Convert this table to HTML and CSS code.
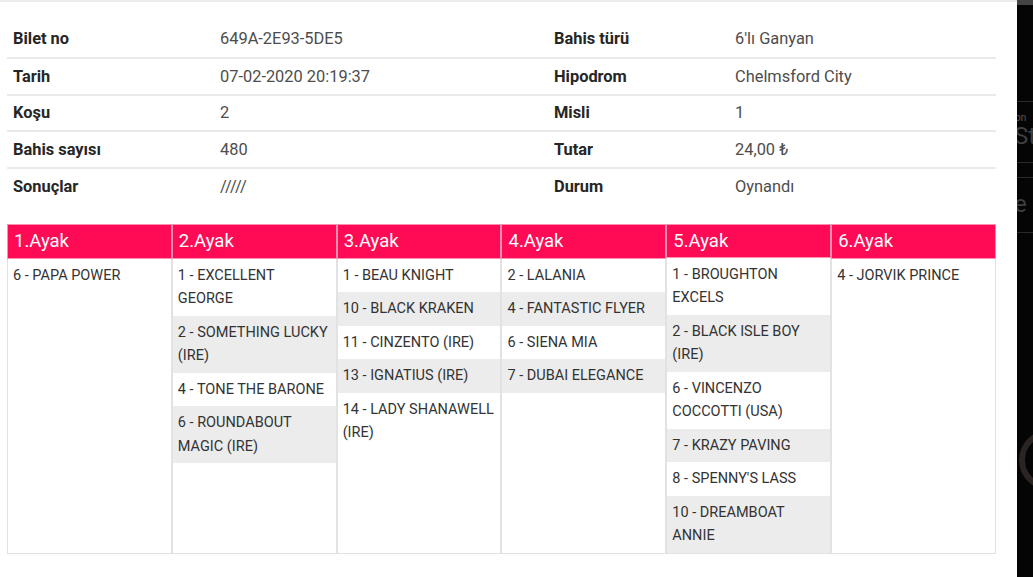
FILE: index.html
```html
<!DOCTYPE html>
<html lang="tr">
<head>
<meta charset="utf-8">
<title>Bilet</title>
<link rel="stylesheet" href="styles.css">
</head>
<body>
<div class="screen">
  <main class="page">
    <section class="info">
      <div class="info-row">
        <div class="lbl">Bilet no</div><div class="val">649A-2E93-5DE5</div>
        <div class="lbl">Bahis türü</div><div class="val">6'lı Ganyan</div>
      </div>
      <div class="info-row">
        <div class="lbl">Tarih</div><div class="val">07-02-2020 20:19:37</div>
        <div class="lbl">Hipodrom</div><div class="val">Chelmsford City</div>
      </div>
      <div class="info-row">
        <div class="lbl">Koşu</div><div class="val">2</div>
        <div class="lbl">Misli</div><div class="val">1</div>
      </div>
      <div class="info-row">
        <div class="lbl">Bahis sayısı</div><div class="val">480</div>
        <div class="lbl">Tutar</div><div class="val">24,00 ₺</div>
      </div>
      <div class="info-row">
        <div class="lbl">Sonuçlar</div><div class="val">/////</div>
        <div class="lbl">Durum</div><div class="val">Oynandı</div>
      </div>
    </section>

    <section class="legs">
      <div class="leg">
        <div class="leg-head">1.Ayak</div>
        <ul class="horses">
          <li>6 - PAPA POWER</li>
        </ul>
      </div>
      <div class="leg">
        <div class="leg-head">2.Ayak</div>
        <ul class="horses">
          <li>1 - EXCELLENT GEORGE</li>
          <li>2 - SOMETHING LUCKY (IRE)</li>
          <li>4 - TONE THE BARONE</li>
          <li>6 - ROUNDABOUT MAGIC (IRE)</li>
        </ul>
      </div>
      <div class="leg">
        <div class="leg-head">3.Ayak</div>
        <ul class="horses">
          <li>1 - BEAU KNIGHT</li>
          <li>10 - BLACK KRAKEN</li>
          <li>11 - CINZENTO (IRE)</li>
          <li>13 - IGNATIUS (IRE)</li>
          <li>14 - LADY SHANAWELL (IRE)</li>
        </ul>
      </div>
      <div class="leg">
        <div class="leg-head">4.Ayak</div>
        <ul class="horses">
          <li>2 - LALANIA</li>
          <li>4 - FANTASTIC FLYER</li>
          <li>6 - SIENA MIA</li>
          <li>7 - DUBAI ELEGANCE</li>
        </ul>
      </div>
      <div class="leg">
        <div class="leg-head">5.Ayak</div>
        <ul class="horses">
          <li>1 - BROUGHTON EXCELS</li>
          <li>2 - BLACK ISLE BOY (IRE)</li>
          <li>6 - VINCENZO COCCOTTI (USA)</li>
          <li>7 - KRAZY PAVING</li>
          <li>8 - SPENNY'S LASS</li>
          <li>10 - DREAMBOAT ANNIE</li>
        </ul>
      </div>
      <div class="leg">
        <div class="leg-head">6.Ayak</div>
        <ul class="horses">
          <li>4 - JORVIK PRINCE</li>
        </ul>
      </div>
    </section>
  </main>
  <aside class="edge">
    <div class="edge-top"></div>
    <div class="edge-block">
      <span class="edge-small">on</span>
      <span class="edge-big">St</span>
    </div>
    <div class="edge-block2"><span class="edge-big">e</span></div>
    <div class="edge-badge"></div>
  </aside>
</div>
</body>
</html>
```

FILE: styles.css
```css
* { box-sizing: border-box; }
html, body { margin: 0; padding: 0; }
body {
  font-family: Roboto, "Noto Sans", "Liberation Sans", sans-serif;
  background: #fff;
  width: 1033px;
  height: 577px;
  overflow: hidden;
}
.screen {
  display: flex;
  height: 577px;
}
.page {
  width: 1017px;
  flex: none;
  border-top: 2px solid #ececec;
  padding: 18px 0 0 7px;
}
.info {
  width: 989px;
}
.info-row {
  display: grid;
  grid-template-columns: 207px 334px 181px 1fr;
  height: 36.75px;
  align-items: center;
  border-top: 2px solid #eaeaea;
}
.info-row:first-child { border-top: none; }
.lbl, .val {
  padding-left: 6px;
  font-size: 16.4px;
}
.lbl {
  font-weight: 700;
  color: #262626;
}
.val {
  color: #4d4d4d;
}
.legs {
  display: flex;
  width: 989px;
  margin-top: 20px;
}
.leg {
  flex: 1 1 0;
  border: 1px solid #e2e2e2;
  height: 330px;
  display: flex;
  flex-direction: column;
}
.leg-head {
  background: #ff0a55;
  color: #fff;
  font-size: 18.5px;
  height: 35px;
  margin: -1px -1px 0;
  border: 1px solid #ff8fae;
  padding: 4px 0 0 6px;
  line-height: 24px;
}
.horses {
  list-style: none;
  margin: 0;
  padding: 0;
}
.horses li {
  font-size: 14.5px;
  color: #333;
  line-height: 23.5px;
  padding: 5px 5px 5px 5px;
}
.horses li:nth-child(even) {
  background: #ececec;
}
.edge {
  flex: 1;
  background: #050505;
  position: relative;
  overflow: hidden;
}
.edge-top {
  height: 5px;
  background: #444;
}
.edge-block {
  margin-top: 96px;
  border-top: 1px solid #2a2a2a;
  border-bottom: 1px solid #2a2a2a;
  height: 62px;
  padding-top: 10px;
  color: #555;
}
.edge-small {
  display: block;
  font-size: 10px;
  line-height: 12px;
  margin-left: -2px;
}
.edge-big {
  display: block;
  font-size: 24px;
  line-height: 24px;
  margin-left: -3px;
  color: #3f3f3f;
}
.edge-block2 {
  margin-top: 14px;
  border-top: 1px solid #2a2a2a;
  border-bottom: 1px solid #2a2a2a;
  height: 56px;
  padding-top: 14px;
  color: #444;
}
.edge-badge {
  position: absolute;
  left: 2px;
  top: 430px;
  width: 60px;
  height: 60px;
  border-radius: 50%;
  border: 6px solid #2a2522;
}
```
